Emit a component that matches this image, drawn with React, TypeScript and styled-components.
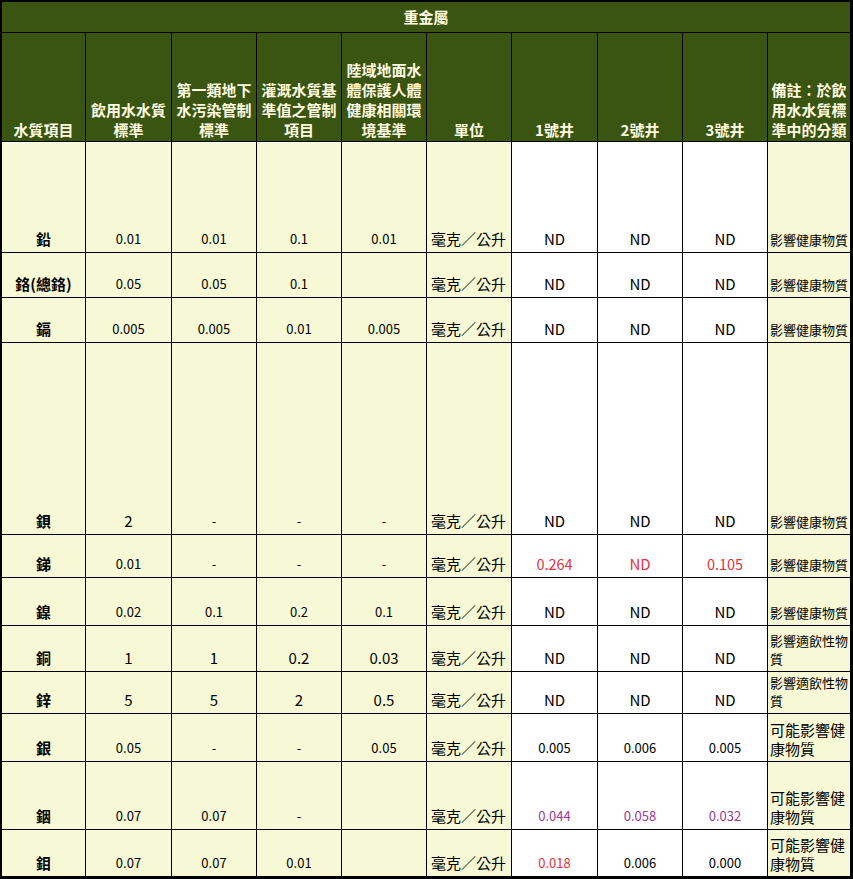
import styled, { createGlobalStyle } from "styled-components"

const GlobalStyle = createGlobalStyle`
    body {
        margin: 0;
        background: #ffffff;
    }
`

const Sheet = styled.table`
    width: 853px;
    table-layout: fixed;
    border-collapse: separate;
    border-spacing: 0;
    border-style: solid;
    border-color: #000;
    border-width: 2px 3px 3px 2px;
    font-family: "Noto Sans CJK TC", "Noto Sans", sans-serif;
    color: #000;
`

const Row = styled.tr<{ $h: number }>`
    height: ${p => p.$h}px;

    &:last-child td {
        border-bottom: none;
    }
`

const Cell = styled.td`
    box-sizing: border-box;
    border-right: 1px solid #000;
    border-bottom: 1px solid #000;
    padding: 0 2px 3px;
    vertical-align: bottom;
    line-height: 20px;
    white-space: nowrap;

    &:last-child {
        border-right: none;
    }
`

const TitleCell = styled(Cell)`
    background: #3a5412;
    color: #fffbe0;
    font-weight: 700;
    font-size: 15px;
    text-align: center;
    vertical-align: middle;
    padding: 0;
`

const HeadCell = styled(Cell)`
    background: #3a5412;
    color: #fffbe0;
    font-weight: 700;
    font-size: 15px;
    text-align: center;
    padding: 0 2px 1px;
`

const ItemCell = styled(Cell)<{ $first?: boolean }>`
    background: #f7f8d5;
    font-weight: 700;
    font-size: 15px;
    text-align: center;
    box-shadow: ${p => (p.$first ? "inset 0 1px 0 #ffffff" : "none")};
`

const ValueCell = styled(Cell)<{ $size: number; $well?: boolean; $first?: boolean; $color?: string }>`
    background: ${p => (p.$well ? "#ffffff" : "#f7f8d5")};
    font-size: ${p => p.$size}px;
    color: ${p => p.$color || "#000"};
    text-align: center;
    box-shadow: ${p => (p.$first ? "inset 0 1px 0 #ffffff" : "none")};
`

const UnitCell = styled(Cell)<{ $first?: boolean }>`
    background: #f7f8d5;
    font-size: 15px;
    text-align: left;
    padding-left: 4px;
    box-shadow: ${p => (p.$first ? "inset 0 1px 0 #ffffff" : "none")};
`

const NoteCell = styled(Cell)<{ $size: number; $first?: boolean }>`
    background: #f7f8d5;
    font-size: ${p => p.$size}px;
    line-height: ${p => (p.$size > 14 ? 19 : 18)}px;
    text-align: left;
    padding-left: 2px;
    white-space: normal;
    box-shadow: ${p => (p.$first ? "inset 0 1px 0 #ffffff" : "none")};
`

const RED = "#e2323c"
const PURPLE = "#9b3b95"

type Well = { v: string; c?: string }

type Metal = {
    name: string
    h: number
    std: string[]
    stdSize: number
    wells: Well[]
    wellSize: number
    note: string
    noteSize: number
}

const nd: Well[] = [{ v: "ND" }, { v: "ND" }, { v: "ND" }]

const metals: Metal[] = [
    { name: "鉛", h: 111, std: ["0.01", "0.01", "0.1", "0.01"], stdSize: 13, wells: nd, wellSize: 15, note: "影響健康物質", noteSize: 13 },
    { name: "鉻(總鉻)", h: 45, std: ["0.05", "0.05", "0.1", ""], stdSize: 13, wells: nd, wellSize: 15, note: "影響健康物質", noteSize: 13 },
    { name: "鎘", h: 45, std: ["0.005", "0.005", "0.01", "0.005"], stdSize: 13, wells: nd, wellSize: 15, note: "影響健康物質", noteSize: 13 },
    { name: "鋇", h: 192, std: ["2", "-", "-", "-"], stdSize: 15, wells: nd, wellSize: 15, note: "影響健康物質", noteSize: 13 },
    {
        name: "銻", h: 43, std: ["0.01", "-", "-", "-"], stdSize: 13,
        wells: [{ v: "0.264", c: RED }, { v: "ND", c: RED }, { v: "0.105", c: RED }], wellSize: 14.5,
        note: "影響健康物質", noteSize: 13,
    },
    { name: "鎳", h: 48, std: ["0.02", "0.1", "0.2", "0.1"], stdSize: 13, wells: nd, wellSize: 15, note: "影響健康物質", noteSize: 13 },
    { name: "銅", h: 46, std: ["1", "1", "0.2", "0.03"], stdSize: 15, wells: nd, wellSize: 15, note: "影響適飲性物質", noteSize: 13 },
    { name: "鋅", h: 42, std: ["5", "5", "2", "0.5"], stdSize: 15, wells: nd, wellSize: 15, note: "影響適飲性物質", noteSize: 13 },
    {
        name: "銀", h: 48, std: ["0.05", "-", "-", "0.05"], stdSize: 13,
        wells: [{ v: "0.005" }, { v: "0.006" }, { v: "0.005" }], wellSize: 13,
        note: "可能影響健康物質", noteSize: 15,
    },
    {
        name: "銦", h: 68, std: ["0.07", "0.07", "-", ""], stdSize: 13,
        wells: [{ v: "0.044", c: PURPLE }, { v: "0.058", c: PURPLE }, { v: "0.032", c: PURPLE }], wellSize: 13,
        note: "可能影響健康物質", noteSize: 15,
    },
    {
        name: "鉬", h: 46, std: ["0.07", "0.07", "0.01", ""], stdSize: 13,
        wells: [{ v: "0.018", c: RED }, { v: "0.006" }, { v: "0.000" }], wellSize: 13,
        note: "可能影響健康物質", noteSize: 15,
    },
]

const colWidths = [84, 86, 85, 85, 85, 85, 86, 85, 85, 82]

const headers: string[][] = [
    ["水質項目"],
    ["飲用水水質", "標準"],
    ["第一類地下", "水污染管制", "標準"],
    ["灌溉水質基", "準值之管制", "項目"],
    ["陸域地面水", "體保護人體", "健康相關環", "境基準"],
    ["單位"],
    ["1號井"],
    ["2號井"],
    ["3號井"],
    ["備註：於飲", "用水水質標", "準中的分類"],
]

const App = () => {
    return (
        <>
            <GlobalStyle />
            <Sheet>
                <colgroup>
                    {colWidths.map((w, i) => (
                        <col key={i} style={{ width: w }} />
                    ))}
                </colgroup>
                <tbody>
                    <Row $h={31}>
                        <TitleCell colSpan={10}>重金屬</TitleCell>
                    </Row>
                    <Row $h={109}>
                        {headers.map((lines, i) => (
                            <HeadCell as="th" key={i}>
                                {lines.map((l, j) => (
                                    <div key={j}>{l}</div>
                                ))}
                            </HeadCell>
                        ))}
                    </Row>
                    {metals.map((m, r) => {
                        const first = r === 0
                        return (
                            <Row $h={m.h} key={m.name}>
                                <ItemCell $first={first}>{m.name}</ItemCell>
                                {m.std.map((s, i) => (
                                    <ValueCell key={i} $size={s === "-" ? 13 : m.stdSize} $first={first}>
                                        {s}
                                    </ValueCell>
                                ))}
                                <UnitCell $first={first}>毫克／公升</UnitCell>
                                {m.wells.map((w, i) => (
                                    <ValueCell
                                        key={i}
                                        $well
                                        $first={first}
                                        $size={w.v === "ND" ? 15 : m.wellSize}
                                        $color={w.c}
                                    >
                                        {w.v}
                                    </ValueCell>
                                ))}
                                <NoteCell $size={m.noteSize} $first={first}>
                                    {m.note}
                                </NoteCell>
                            </Row>
                        )
                    })}
                </tbody>
            </Sheet>
        </>
    )
}

export default App
